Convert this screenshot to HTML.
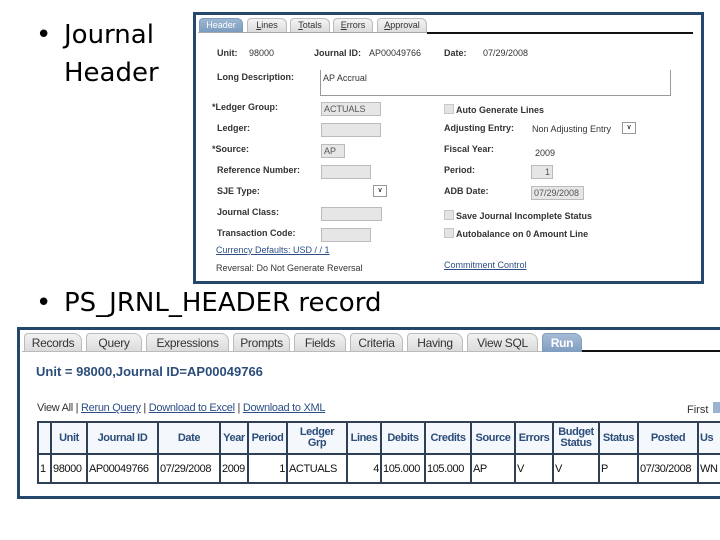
<!DOCTYPE html>
<html><head><meta charset="utf-8"><style>
*{margin:0;padding:0;box-sizing:border-box}
body{width:720px;height:540px;background:#fff;position:relative;overflow:hidden;font-family:"Liberation Sans",sans-serif}
.a{position:absolute;white-space:nowrap}
.big{font-family:"DejaVu Sans","Liberation Sans",sans-serif;font-size:26px;color:#000;letter-spacing:0px}
.f1{position:absolute;left:193px;top:12px;width:511px;height:272px;border:3px solid #25476c;background:#fff}
.f2{position:absolute;left:17px;top:327px;width:720px;height:172px;border:3px solid #25476c;background:#fff}
.l{font-size:9px;color:#333;font-weight:bold}
.v{font-size:9px;color:#333}
.box{position:absolute;background:#e6e6e6;border:1px solid #bbb;font-size:9px;color:#555;padding:1px 2px}
.cb{position:absolute;width:10px;height:10px;background:#e4e4e4;border:1px solid #c8c8c8}
.tab{position:absolute;height:14px;font-size:9px;color:#333;text-align:center;line-height:13px;background:linear-gradient(#f4f4f4,#dcdcdc);border:1px solid #bbb;border-bottom:none;border-radius:4px 6px 0 0}
.t2{position:absolute;top:333px;height:19px;font-size:12px;color:#333;text-align:center;line-height:18px;background:linear-gradient(#f2f2f2,#dadada);border:1px solid #bbb;border-bottom:none;border-radius:4px 8px 0 0;letter-spacing:-0.3px}
.lk{color:#2d4f86;text-decoration:underline}
table{border-collapse:collapse;position:absolute;left:37px;top:421px;font-size:11px;table-layout:fixed;width:700px;letter-spacing:-0.4px}
td,th{border:2px solid #2f3f55;padding:0 1px;overflow:hidden;white-space:nowrap}
th{color:#2b4d7a;font-weight:bold;height:32px;font-size:11px;line-height:11px;background:#f4f7fb}
td{height:29px;color:#111}
</style></head><body>
<div class="a big" style="left:36px;top:20px">•</div>
<div class="a big" style="left:64px;top:20px">Journal</div>
<div class="a big" style="left:64px;top:58px">Header</div>
<div class="a big" style="left:36px;top:288px">•</div>
<div class="a big" style="left:64px;top:288px">PS_JRNL_HEADER record</div>

<div class="f1"></div>
<div class="tab" style="left:199px;top:18px;width:44px;background:linear-gradient(#9db6d2,#7b9cc0);color:#fff;border-color:#7b9cc0">Header</div>
<div class="tab" style="left:247px;top:18px;width:40px"><u>L</u>ines</div>
<div class="tab" style="left:290px;top:18px;width:40px"><u>T</u>otals</div>
<div class="tab" style="left:333px;top:18px;width:40px"><u>E</u>rrors</div>
<div class="tab" style="left:377px;top:18px;width:50px"><u>A</u>pproval</div>
<div class="a" style="left:427px;top:32px;width:266px;height:2px;background:#111"></div>
<div class="a" style="left:198px;top:32px;width:229px;height:1px;background:#aaa"></div>

<div class="a l" style="left:217px;top:48px">Unit:</div><div class="a v" style="left:249px;top:48px">98000</div>
<div class="a l" style="left:314px;top:48px">Journal ID:</div><div class="a v" style="left:369px;top:48px">AP00049766</div>
<div class="a l" style="left:444px;top:48px">Date:</div><div class="a v" style="left:483px;top:48px">07/29/2008</div>
<div class="a l" style="left:217px;top:72px">Long Description:</div>
<div class="a" style="left:320px;top:70px;width:351px;height:26px;border:1px solid #999;border-top:none;font-size:9px;color:#333;padding:3px 2px">AP Accrual</div>
<div class="a l" style="left:212px;top:102px">*Ledger Group:</div><div class="box" style="left:321px;top:102px;width:60px;height:14px">ACTUALS</div>
<div class="cb" style="left:444px;top:104px"></div><div class="a l" style="left:456px;top:105px;font-size:9px">Auto Generate Lines</div>
<div class="a l" style="left:217px;top:123px">Ledger:</div><div class="box" style="left:321px;top:123px;width:60px;height:14px"></div>
<div class="a l" style="left:444px;top:123px">Adjusting Entry:</div><div class="a v" style="left:532px;top:124px">Non Adjusting Entry</div>
<div class="a" style="left:622px;top:122px;width:14px;height:12px;border:1px solid #999;font-size:7px;text-align:center;line-height:10px">∨</div>
<div class="a l" style="left:212px;top:144px">*Source:</div><div class="box" style="left:321px;top:144px;width:24px;height:14px">AP</div>
<div class="a l" style="left:444px;top:144px">Fiscal Year:</div><div class="a v" style="left:535px;top:148px">2009</div>
<div class="a l" style="left:217px;top:165px">Reference Number:</div><div class="box" style="left:321px;top:165px;width:50px;height:14px"></div>
<div class="a l" style="left:444px;top:165px">Period:</div><div class="box" style="left:531px;top:165px;width:22px;height:14px;text-align:right">1</div>
<div class="a l" style="left:217px;top:186px">SJE Type:</div>
<div class="a" style="left:373px;top:185px;width:14px;height:12px;border:1px solid #999;font-size:7px;text-align:center;line-height:10px">∨</div>
<div class="a l" style="left:444px;top:186px">ADB Date:</div><div class="box" style="left:531px;top:186px;width:53px;height:14px">07/29/2008</div>
<div class="a l" style="left:217px;top:207px">Journal Class:</div><div class="box" style="left:321px;top:207px;width:61px;height:14px"></div>
<div class="cb" style="left:444px;top:210px"></div><div class="a l" style="left:456px;top:211px">Save Journal Incomplete Status</div>
<div class="a l" style="left:217px;top:228px">Transaction Code:</div><div class="box" style="left:321px;top:228px;width:50px;height:14px"></div>
<div class="cb" style="left:444px;top:228px"></div><div class="a l" style="left:456px;top:229px">Autobalance on 0 Amount Line</div>
<div class="a v lk" style="left:216px;top:245px">Currency Defaults: USD / / 1</div>
<div class="a v" style="left:216px;top:263px">Reversal: Do Not Generate Reversal</div>
<div class="a v lk" style="left:444px;top:260px">Commitment Control</div>

<div class="f2"></div>
<div class="t2" style="left:24px;width:58px">Records</div>
<div class="t2" style="left:86px;width:56px">Query</div>
<div class="t2" style="left:146px;width:83px">Expressions</div>
<div class="t2" style="left:233px;width:57px">Prompts</div>
<div class="t2" style="left:294px;width:52px">Fields</div>
<div class="t2" style="left:350px;width:53px">Criteria</div>
<div class="t2" style="left:407px;width:56px">Having</div>
<div class="t2" style="left:467px;width:71px">View SQL</div>
<div class="t2" style="left:542px;width:40px;background:linear-gradient(#a6bcd6,#7f9dc0);color:#fff;border-color:#7f9dc0;font-weight:bold">Run</div>
<div class="a" style="left:582px;top:350px;width:140px;height:2px;background:#111"></div>
<div class="a" style="left:22px;top:351px;width:520px;height:1px;background:#bbb"></div>
<div class="a" style="left:36px;top:364px;font-size:13px;font-weight:bold;color:#2b4d7a">Unit = 98000,Journal ID=AP00049766</div>
<div class="a" style="left:37px;top:402px;font-size:11px;color:#333;letter-spacing:-0.3px">View All | <span class="lk">Rerun Query</span> | <span class="lk">Download to Excel</span> | <span class="lk">Download to XML</span></div>
<div class="a" style="left:687px;top:404px;font-size:11px;color:#333">First</div>
<div class="a" style="left:713px;top:402px;width:10px;height:11px;background:#9ab3cf"></div>
<table>
<colgroup><col style="width:13px"><col style="width:36px"><col style="width:71px"><col style="width:62px"><col style="width:28px"><col style="width:39px"><col style="width:60px"><col style="width:34px"><col style="width:44px"><col style="width:46px"><col style="width:44px"><col style="width:38px"><col style="width:46px"><col style="width:39px"><col style="width:60px"><col style="width:40px"></colgroup>
<tr><th></th><th>Unit</th><th>Journal ID</th><th>Date</th><th>Year</th><th>Period</th><th>Ledger<br>Grp</th><th>Lines</th><th>Debits</th><th>Credits</th><th>Source</th><th>Errors</th><th>Budget<br>Status</th><th>Status</th><th>Posted</th><th style="text-align:left">Us</th></tr>
<tr><td>1</td><td>98000</td><td>AP00049766</td><td>07/29/2008</td><td>2009</td><td style="text-align:right">1</td><td>ACTUALS</td><td style="text-align:right">4</td><td>105.000</td><td>105.000</td><td>AP</td><td>V</td><td>V</td><td>P</td><td>07/30/2008</td><td>WN</td></tr>
</table>
</body></html>
